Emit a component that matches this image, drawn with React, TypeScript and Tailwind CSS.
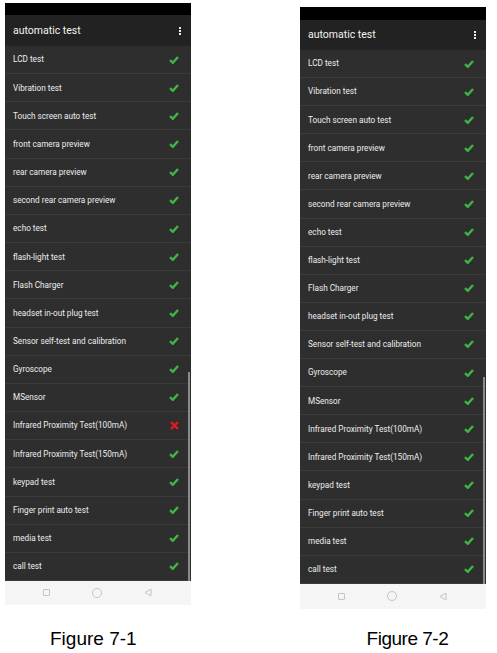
const TESTS = [
  "LCD test",
  "Vibration test",
  "Touch screen auto test",
  "front camera preview",
  "rear camera preview",
  "second rear camera preview",
  "echo test",
  "flash-light test",
  "Flash Charger",
  "headset in-out plug test",
  "Sensor self-test and calibration",
  "Gyroscope",
  "MSensor",
  "Infrared Proximity Test(100mA)",
  "Infrared Proximity Test(150mA)",
  "keypad test",
  "Finger print auto test",
  "media test",
  "call test",
]

const Check = () => (
  <svg width="10" height="8" viewBox="0 0 10 8">
    <path d="M1 4.2 L3.8 6.8 L9 1" fill="none" stroke="#3fb548" strokeWidth="2.4" />
  </svg>
)

const Cross = () => (
  <svg width="9" height="9" viewBox="0 0 9 9">
    <path d="M1 1 L8 8 M8 1 L1 8" fill="none" stroke="#e3191f" strokeWidth="2.4" />
  </svg>
)

const Phone = ({ failed, statusH, headerH, rowH, navH, scrollTop }: {
  failed: number
  statusH: string
  headerH: string
  rowH: string
  navH: string
  scrollTop: string
}) => {
  return (
    <div className="flex w-[186px] flex-col" style={{ fontFamily: "Roboto, sans-serif" }}>
      <div className="bg-black" style={{ height: statusH }} />
      <div
        className="flex items-center justify-between bg-[#222222] pl-[8px] pr-[10px]"
        style={{ height: headerH }}
      >
        <span className="text-[10.5px] text-[#f2f2f2]">automatic test</span>
        <div className="flex flex-col gap-[1px]">
          <span className="h-[2px] w-[2px] bg-[#eeeeee]" />
          <span className="h-[2px] w-[2px] bg-[#eeeeee]" />
          <span className="h-[2px] w-[2px] bg-[#eeeeee]" />
        </div>
      </div>
      <div className="relative bg-[#2e2e2e]">
        {TESTS.map((name, i) => (
          <div
            key={i}
            className="flex items-center justify-between border-b border-[#3a3a3a] pl-[8px] pr-[12px] last:border-b-0"
            style={{ height: rowH }}
          >
            <span className="text-[8.2px] text-[#ededed]">{name}</span>
            {i === failed ? <Cross /> : <Check />}
          </div>
        ))}
        <div
          className="absolute bottom-0 right-[1px] w-[2px] bg-[#8a8a8a]"
          style={{ top: scrollTop }}
        />
      </div>
      <div
        className="flex items-center justify-center gap-[42px] bg-[#f5f5f5] pr-[2px]"
        style={{ height: navH }}
      >
        <span className="h-[7px] w-[7px] rounded-[1px] border border-[#c4c4c4]" />
        <span className="h-[10px] w-[10px] rounded-full border border-[#c4c4c4]" />
        <svg width="8" height="9" viewBox="0 0 8 9">
          <path d="M7 1 L1 4.5 L7 8 Z" fill="none" stroke="#c4c4c4" strokeWidth="1" />
        </svg>
      </div>
    </div>
  )
}

export default function App() {
  return (
    <div className="h-[653px] w-[497px] bg-white">
      <div className="flex">
        <div className="ml-[5px] mt-[3px]">
          <Phone failed={13} statusH="12px" headerH="31px" rowH="28.16px" navH="24px" scrollTop="326px" />
        </div>
        <div className="ml-[109px] mt-[7px]">
          <Phone failed={-1} statusH="13px" headerH="30px" rowH="28.1px" navH="25px" scrollTop="327px" />
        </div>
      </div>
      <div
        className="flex text-[19px] leading-none text-black"
        style={{ fontFamily: "'Liberation Sans', Arial, sans-serif" }}
      >
        <span className="ml-[50px] mt-[20px]">Figure 7-1</span>
        <span className="ml-[230px] mt-[20px] tracking-[-0.5px]">Figure 7-2</span>
      </div>
    </div>
  )
}
